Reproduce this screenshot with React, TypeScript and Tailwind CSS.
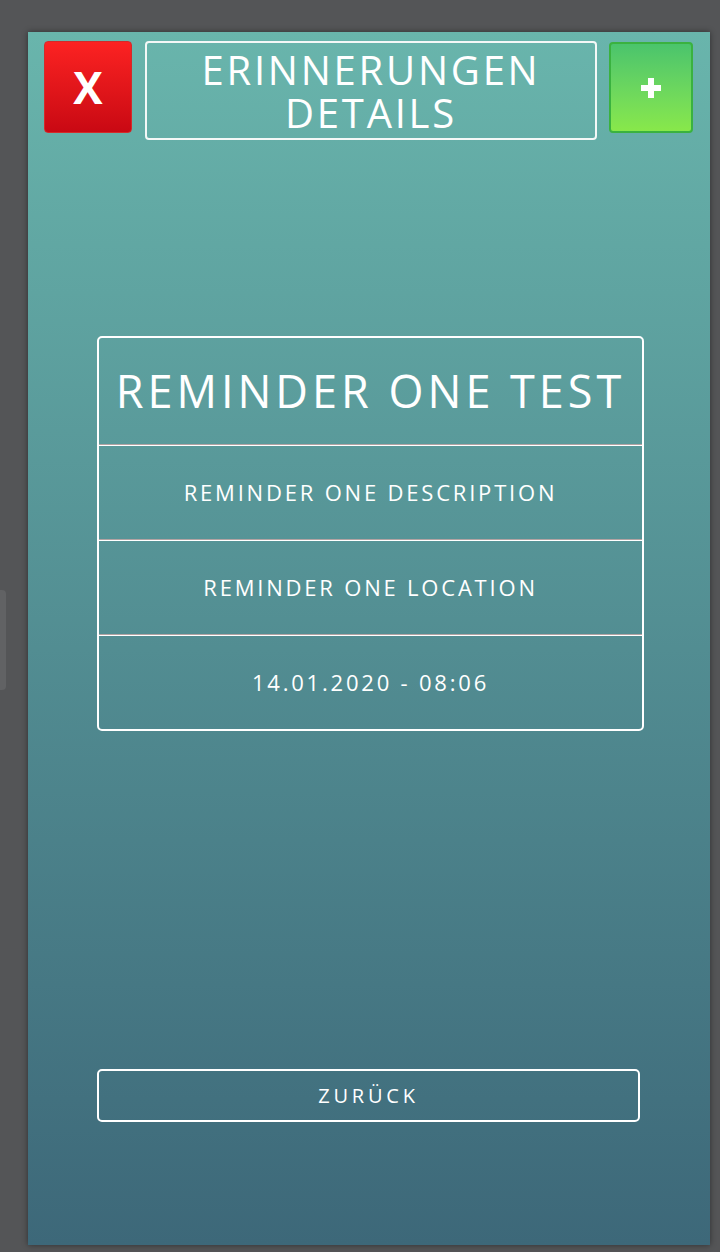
import React from "react";

function Divider() {
  return (
    <div className="flex flex-col">
      <div className="h-px bg-[#b3a3a3]" />
      <div className="h-px bg-white" />
    </div>
  );
}

function Row({ text }: { text: string }) {
  return (
    <div className="h-[93px] flex items-center justify-center text-[22px] tracking-[2.8px] text-white">
      {text}
    </div>
  );
}

export default function App() {
  return (
    <div
      className="relative w-[720px] h-[1252px] bg-[#545557] pl-[28px] pt-[32px]"
      style={{ fontFamily: '"Open Sans", "Liberation Sans", sans-serif' }}
    >
      <div className="absolute left-0 top-[590px] w-[6px] h-[100px] rounded-r-[4px] bg-[#616264]" />
      <div className="w-[682px] h-[1213px] bg-gradient-to-b from-[#69b5ac] to-[#3d6879] shadow-[0_0_6px_rgba(0,0,0,0.45)] flex flex-col">
        <div className="flex items-start pt-[9px] pl-[16px]">
          <div className="w-[88px] h-[92px] rounded-[4px] bg-gradient-to-b from-[#fc2222] to-[#c90813] border border-[#d42a2a] flex items-center justify-center text-white font-bold text-[44px] leading-none">
            X
          </div>
          <div className="ml-[13px] w-[452px] h-[99px] rounded-[4px] border-2 border-[#f4f8f7] flex flex-col items-center justify-center text-white text-[40px] leading-[43px] tracking-[2.75px] pt-[1px]">
            <span>ERINNERUNGEN</span>
            <span>DETAILS</span>
          </div>
          <div className="ml-[12px] mt-px w-[84px] h-[91px] rounded-[4px] bg-gradient-to-b from-[#4ac46c] to-[#88e84a] border-2 border-[#3ab23f] flex items-center justify-center">
            <svg width="20" height="20" viewBox="0 0 20 20">
              <rect x="7" y="0" width="6" height="20" fill="white" />
              <rect x="0" y="7" width="20" height="6" fill="white" />
            </svg>
          </div>
        </div>

        <div className="mt-[196px] ml-[69px] w-[547px] rounded-[5px] border-2 border-white flex flex-col">
          <div className="h-[106px] flex items-center justify-center text-white text-[45px] tracking-[4px]">
            REMINDER ONE TEST
          </div>
          <Divider />
          <Row text="REMINDER ONE DESCRIPTION" />
          <Divider />
          <Row text="REMINDER ONE LOCATION" />
          <Divider />
          <Row text="14.01.2020 - 08:06" />
        </div>

        <div className="mt-[338px] ml-[69px] w-[543px] h-[53px] rounded-[5px] border-2 border-white flex items-center justify-center text-white text-[20px] tracking-[3.8px]">
          ZURÜCK
        </div>
      </div>
    </div>
  );
}
